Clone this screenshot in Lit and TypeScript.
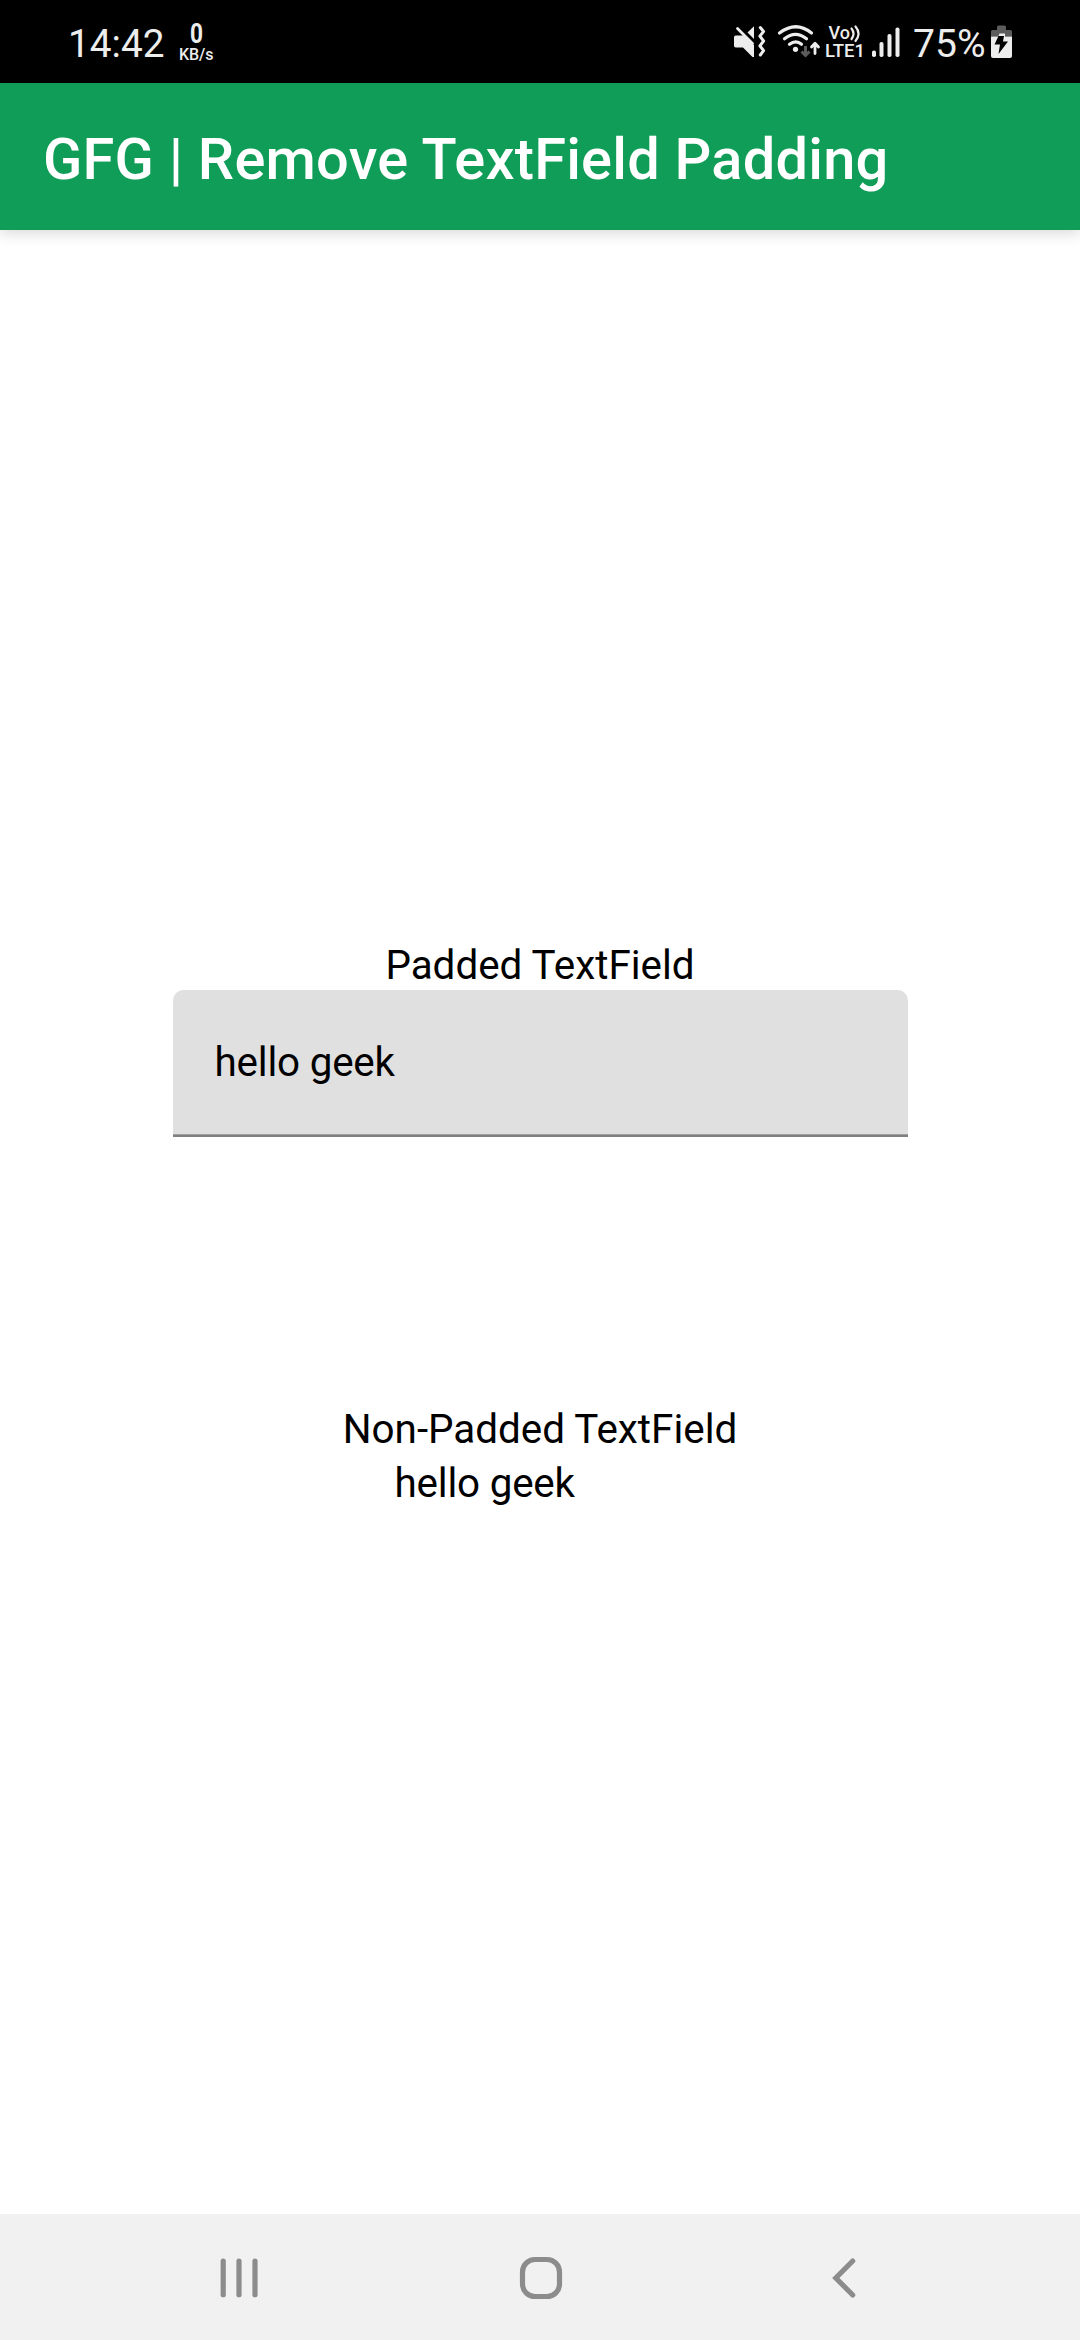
import { LitElement, html, css } from "lit";
import { customElement, property } from "lit/decorators.js";

@customElement("status-bar")
class StatusBar extends LitElement {
  static styles = css`
    :host {
      display: flex;
      justify-content: space-between;
      height: 83px;
      background: #000;
      font-family: Roboto, sans-serif;
    }
    svg {
      display: block;
      fill: #ededed;
      font-family: Roboto, sans-serif;
    }
    .ink {
      fill: none;
      stroke: #ededed;
      stroke-linecap: round;
      stroke-linejoin: round;
    }
    .dim {
      fill: #5c5c5c;
    }
    .dim-line {
      fill: none;
      stroke: #5c5c5c;
      stroke-width: 3;
    }
    .cut {
      fill: #000;
    }
    .medium {
      font-weight: 500;
    }
    .bold {
      font-weight: 700;
    }
  `;

  render() {
    return html`
      <svg width="280" height="83" viewBox="0 0 280 83">
        <text x="68" y="57" font-size="39.5" textLength="96.5" lengthAdjust="spacingAndGlyphs">14:42</text>
        <text class="bold" x="190" y="42.5" font-size="27" textLength="13" lengthAdjust="spacingAndGlyphs">0</text>
        <text class="medium" x="179" y="59.5" font-size="16" textLength="34.5" lengthAdjust="spacing">KB/s</text>
      </svg>
      <svg width="360" height="83" viewBox="720 0 360 83">
        <path d="M736 35.5h7.5l10.5 9.5v12h-1.500l-9.500-9.500h-7.200q-1.800 0-1.800-1.800v-8.400q0-1.800 1.800-1.800z" />
        <path d="M747.5 32.5l6.500-6.200v12.700z" />
        <path class="ink" stroke-width="2.800" d="M737.500 28.500L752.500 43.500" />
        <path class="ink" stroke-width="3" d="M760.300 27.600l3.300 3.800-3.700 4.800 3.700 4.800-3.700 4.800 3.700 4.800-3.300 4.400" />
        <path class="ink" stroke-width="3.200" d="M779.500 33q16.500-12.500 32 0M784.500 38.800q11-9 22 0M789.500 44.200q6.500-4.800 12 0" />
        <circle cx="795.5" cy="49.300" r="2.600" />
        <path class="dim-line" d="M805.500 46v9.500M801.500 51.500l4 4 4-4" />
        <path class="ink" stroke-width="2.800" stroke-linecap="butt" d="M815 53.500v-10M811.500 47l3.500-3.800 3.500 3.800" />
        <text class="medium" x="828.500" y="39" font-size="18" textLength="21.500" lengthAdjust="spacingAndGlyphs">Vo</text>
        <path class="ink" stroke-width="2.200" d="M851.500 28.500q4 5 0 10.500M855.500 26.500q6 7 0 14.500" />
        <text class="medium" x="825" y="56.500" font-size="18" textLength="40" lengthAdjust="spacingAndGlyphs">LTE1</text>
        <rect x="872" y="50.500" width="4" height="6.500" rx="1.800" />
        <rect x="879.500" y="42" width="4" height="15" rx="1.800" />
        <rect x="887.500" y="34" width="4" height="23" rx="1.800" />
        <rect x="895.500" y="27.500" width="4" height="29.500" rx="1.800" />
        <text x="913" y="57" font-size="38.500" textLength="72.500" lengthAdjust="spacingAndGlyphs">75%</text>
        <path class="dim" d="M997 30v-3q0-1.500 1.500-1.500h6q1.500 0 1.500 1.500v3h4.500q1.500 0 1.500 1.500v5h-21v-5q0-1.500 1.500-1.500z" />
        <path d="M991 36.500h21v19.500q0 2-2 2h-17q-2 0-2-2z" />
        <path d="M999.500 33.500h5.500v4h-7z" />
        <path class="cut" d="M998.500 36h5.500l-1 5.500h5l-9.500 12.500 1.500-9.500h-5.500z" />
      </svg>
    `;
  }
}

@customElement("nav-bar")
class NavBar extends LitElement {
  static styles = css`
    :host {
      display: flex;
      justify-content: space-between;
      align-items: center;
      box-sizing: border-box;
      height: 126px;
      padding: 0 210px;
      background: #f1f1f1;
    }
    svg {
      display: block;
      fill: none;
      stroke: #8c8c8c;
      stroke-width: 5.2;
      stroke-linecap: round;
    }
  `;

  render() {
    return html`
      <svg width="60" height="60" viewBox="0 0 60 60">
        <path d="M13.200 14.200v33.500M29 14.200v33.500M45 14.200v33.500" />
      </svg>
      <svg width="60" height="60" viewBox="0 0 60 60">
        <rect x="12.500" y="12.500" width="37" height="37" rx="12.500" />
      </svg>
      <svg width="60" height="60" viewBox="0 0 60 60">
        <path d="M42.700 14L25.800 31 42.700 48" stroke-linejoin="miter" />
      </svg>
    `;
  }
}

@customElement("labelled-field")
class LabelledField extends LitElement {
  @property() label = "";
  @property() value = "";
  @property({ type: Boolean, reflect: true }) padded = false;

  static styles = css`
    :host {
      display: flex;
      flex-direction: column;
      align-items: center;
      font-family: Roboto, sans-serif;
      font-size: 40.4px;
      line-height: 49px;
      color: #000;
    }
    .label,
    .value {
      padding-top: 5px;
      white-space: pre;
    }
    .value {
      letter-spacing: -0.2px;
    }
    .field {
      width: 291px;
    }
    :host([padded]) .field {
      box-sizing: border-box;
      display: flex;
      align-items: center;
      width: 735px;
      height: 147px;
      padding: 0 42px 8px;
      background: linear-gradient(#a0a0a0, #a0a0a0) 0 144px / 100% 1px no-repeat,
        linear-gradient(#808080, #808080) 0 145px / 100% 2px no-repeat, #e0e0e0;
      border-radius: 10.5px 10.5px 0 0;
    }
  `;

  render() {
    return html`
      <div class="label">${this.label}</div>
      <div class="field"><div class="value">${this.value}</div></div>
    `;
  }
}

@customElement("app-root")
class AppRoot extends LitElement {
  static styles = css`
    :host {
      display: flex;
      flex-direction: column;
      width: 1080px;
      height: 2340px;
      background: #fff;
      font-family: Roboto, sans-serif;
    }
    .app-bar {
      display: flex;
      align-items: center;
      box-sizing: border-box;
      height: 147px;
      padding: 4px 43px 0;
      background: #0f9d58;
      box-shadow: 0 3px 14px rgba(0, 0, 0, 0.16);
      color: #fff;
      font-size: 57.75px;
      font-weight: 500;
      letter-spacing: 0.22px;
      white-space: pre;
    }
    status-bar {
      position: relative;
    }
    .content {
      flex: 1;
      display: flex;
      flex-direction: column;
      align-items: center;
      justify-content: center;
      gap: 263px;
    }
  `;

  render() {
    return html`
      <status-bar></status-bar>
      <div class="app-bar">GFG | Remove TextField Padding</div>
      <div class="content">
        <labelled-field padded label="Padded TextField" value="hello geek"></labelled-field>
        <labelled-field label="Non-Padded TextField" value="hello geek"></labelled-field>
      </div>
      <nav-bar></nav-bar>
    `;
  }
}
